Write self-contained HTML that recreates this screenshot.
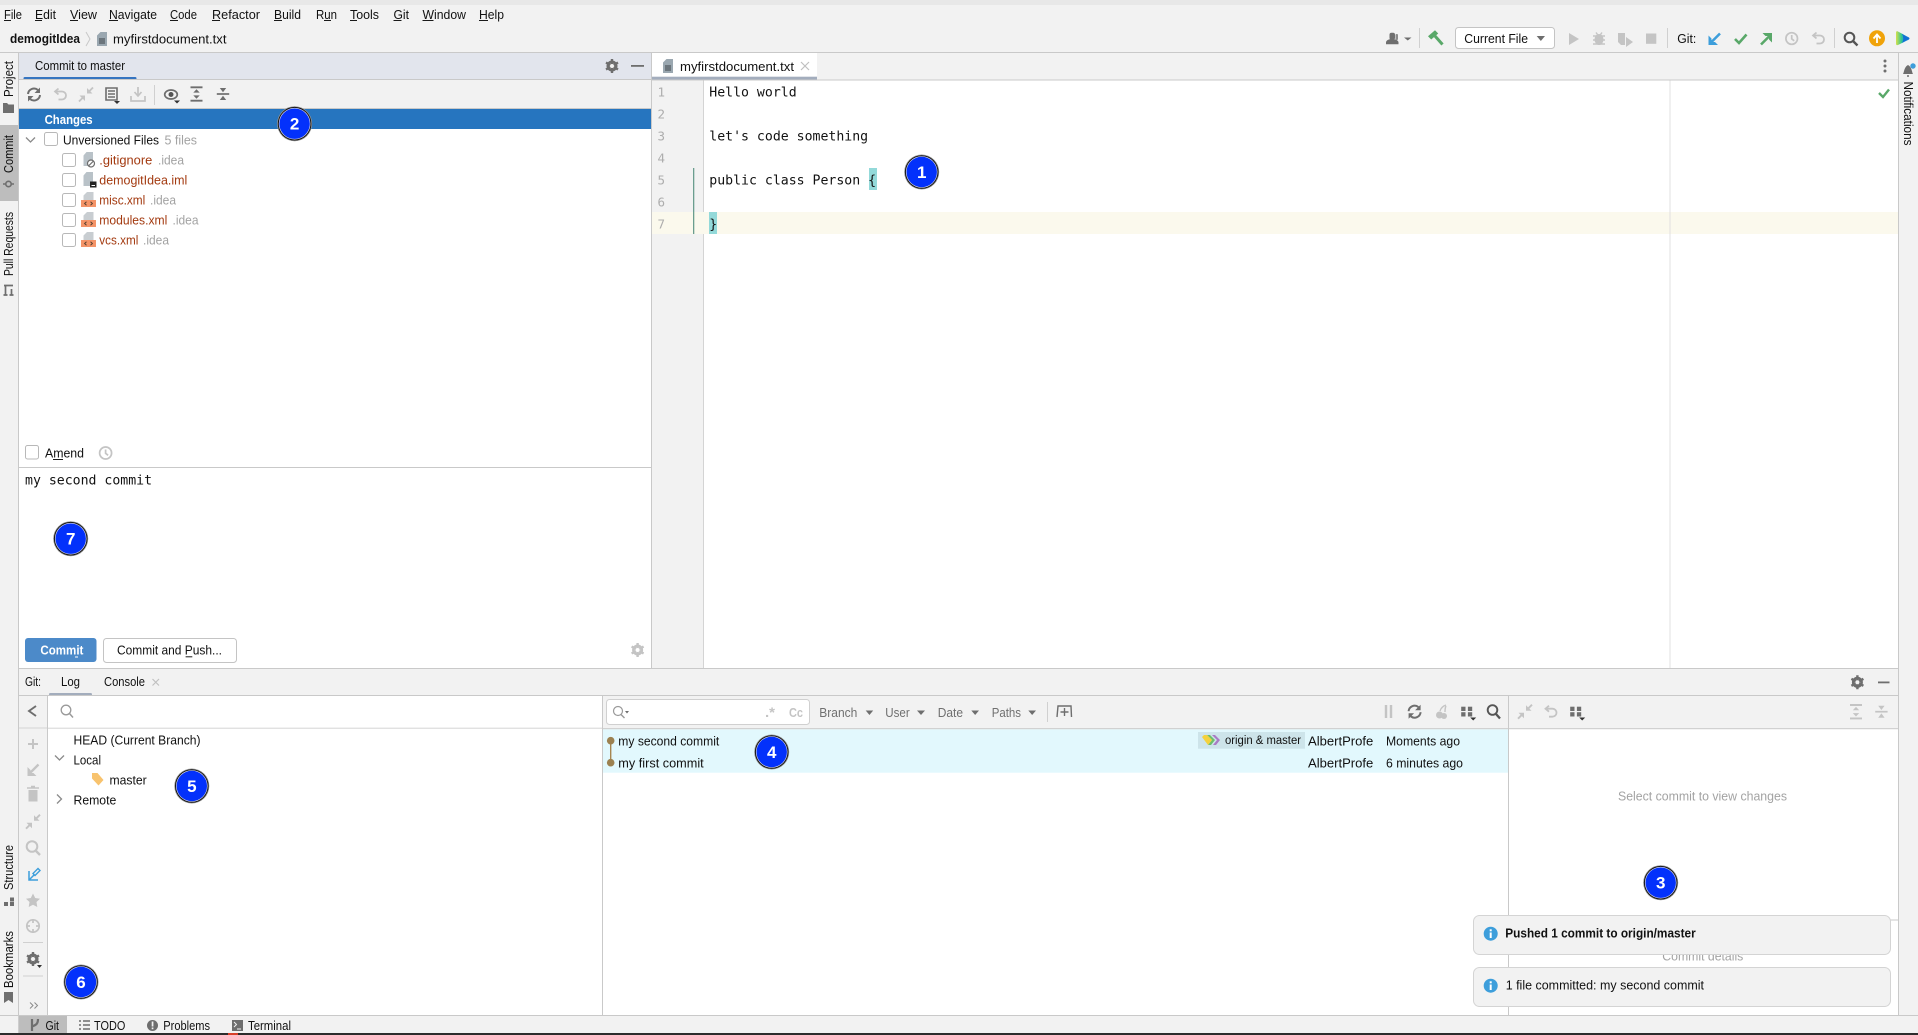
<!DOCTYPE html>
<html lang="en">
<head>
<meta charset="utf-8">
<title>demogitIdea</title>
<style>
html,body{margin:0;padding:0;width:1918px;height:1035px;overflow:hidden;background:#f2f2f2}
svg{display:block}
text{font-family:"Liberation Sans",sans-serif;font-size:12.5px;fill:#111}
.mono{font-family:"DejaVu Sans Mono","Liberation Mono",monospace;font-size:13.2px;fill:#111}
.b{font-weight:bold}
.g{fill:#a3a3a3}
.r{fill:#a33a10}
.f{fill:#707070}
.w{fill:#fff}
.ln{fill:#adadad;font-family:"DejaVu Sans Mono","Liberation Mono",monospace;font-size:12.5px}
.num{font-family:"Liberation Sans",sans-serif;font-weight:bold;font-size:17px;fill:#fff;text-anchor:middle}
.i{fill:none;stroke:#6e6e6e;stroke-width:1.7}
.d{fill:none;stroke:#c4c4c4;stroke-width:1.7}
.cb{fill:#fff;stroke:#b8b8b8;stroke-width:1}
</style>
</head>
<body>
<svg width="1918" height="1035" viewBox="0 0 1918 1035" xmlns="http://www.w3.org/2000/svg">
<defs>
<linearGradient id="lg" x1="0" y1="0" x2="1" y2="0"><stop offset="0" stop-color="#d6e04c"/><stop offset=".4" stop-color="#35c78f"/><stop offset=".7" stop-color="#1a9ad0"/><stop offset="1" stop-color="#1270d6"/></linearGradient>
<g id="doc"><path d="M3.500 0H10V14H0V3.500Z" fill="#9aa7b0"/><path d="M2 7h6M2 9h6M2 11h6" stroke="#3c4347" stroke-width="1"/></g>
<g id="sheet"><path d="M3.500 0H10V8H0V3.500Z" fill="#c8cdd1"/></g>
<g id="xml"><use href="#sheet" x="2.500" y="0"/><rect x="0" y="8" width="15" height="7" fill="#f49468"/><path d="M5.500 9.800 3.600 11.500 5.500 13.200M9.500 9.800 11.400 11.500 9.500 13.200" fill="none" stroke="#5a4030" stroke-width="1"/></g>
<g id="gear"><circle cx="0" cy="0" r="4.200" fill="none" stroke="#6e6e6e" stroke-width="2.600"/><path d="M0-7V7M-6-3.500 6 3.500M-6 3.500 6-3.500" stroke="#6e6e6e" stroke-width="2.400"/><circle cx="0" cy="0" r="2" fill="#f2f2f2"/></g>
<g id="gearl"><circle cx="0" cy="0" r="4.200" fill="none" stroke="#c4c4c4" stroke-width="2.600"/><path d="M0-7V7M-6-3.500 6 3.500M-6 3.500 6-3.500" stroke="#c4c4c4" stroke-width="2.400"/><circle cx="0" cy="0" r="2" fill="#fff"/></g>
<g id="grid"><rect x="-5.500" y="-5" width="4.300" height="4.300" fill="#6e6e6e"/><rect x="1.200" y="-5" width="4.300" height="4.300" fill="#6e6e6e"/><rect x="-5.500" y=".5" width="4.300" height="4.300" fill="#6e6e6e"/><rect x="1.200" y=".5" width="4.300" height="4.300" fill="#6e6e6e"/><path d="M3.500 5.800h6l-3 3z" fill="#333"/></g>
<g id="mark"><circle r="17.500" fill="#999"/><circle r="16.800" fill="#151515"/><circle r="15.800" fill="#dde"/><circle r="15.200" fill="#0331fb"/></g>
<g id="undo"><path d="M-2-6-5.500-3-2 0" fill="none" stroke="#c4c4c4" stroke-width="1.800"/><path d="M-5-3H1.500A3.800 3.800 0 0 1 1.500 5H-2" fill="none" stroke="#c4c4c4" stroke-width="1.800"/></g>
<g id="cmp"><path d="M-7 7-2.500 2.500M7-7 2.500-2.500" stroke="#c4c4c4" stroke-width="1.900"/><path d="M-1 1-6.500 1-1 6.500ZM1-1 6.500-1 1-6.500Z" fill="#c4c4c4"/></g>
<g id="refr"><path d="M-6-.5A6 6 0 0 1 3.800-4.600M6 .5A6 6 0 0 1-3.800 4.600" fill="none" stroke="#6e6e6e" stroke-width="2"/><path d="M6-7V-1.500H.5ZM-6 7V1.500H-.5Z" fill="#6e6e6e"/></g>
<g id="exp"><path d="M-6-6.700H6M-6 6.700H6" stroke-width="1.900" fill="none"/><path d="M0-4.800-3.200-1.400H3.200ZM0 4.800-3.200 1.400H3.200Z" stroke="none"/></g>
<g id="col"><path d="M-6.200 0H6.200" stroke-width="1.700" fill="none"/><path d="M0-1.700-3.200-6H3.200ZM0 1.700-3.200 6H3.200Z" stroke="none"/></g>
</defs>

<!-- base -->
<rect width="1918" height="1035" fill="#f2f2f2"/>
<rect width="1918" height="5" fill="#e8e8e8"/>

<!-- menu -->
<text x="4" y="19" textLength="18" lengthAdjust="spacingAndGlyphs">File</text>
<text x="35" y="19" textLength="21" lengthAdjust="spacingAndGlyphs">Edit</text>
<text x="70" y="19" textLength="27" lengthAdjust="spacingAndGlyphs">View</text>
<text x="109" y="19" textLength="48" lengthAdjust="spacingAndGlyphs">Navigate</text>
<text x="170" y="19" textLength="27" lengthAdjust="spacingAndGlyphs">Code</text>
<text x="212" y="19" textLength="48" lengthAdjust="spacingAndGlyphs">Refactor</text>
<text x="274" y="19" textLength="27" lengthAdjust="spacingAndGlyphs">Build</text>
<text x="316" y="19" textLength="21" lengthAdjust="spacingAndGlyphs">Run</text>
<text x="350" y="19" textLength="29" lengthAdjust="spacingAndGlyphs">Tools</text>
<text x="393.500" y="19" textLength="15.500" lengthAdjust="spacingAndGlyphs">Git</text>
<text x="422.500" y="19" textLength="43.500" lengthAdjust="spacingAndGlyphs">Window</text>
<text x="479" y="19" textLength="25" lengthAdjust="spacingAndGlyphs">Help</text>
<path d="M4 20.500h7M35 20.500h7M70 20.500h8M109 20.500h9M170 20.500h8M212 20.500h8M274 20.500h8M324 20.500h7M350 20.500h7M393.500 20.500h8M422.500 20.500h11M479 20.500h9" stroke="#1a1a1a" stroke-width="1"/>

<!-- nav bar -->
<text class="b" x="10" y="43" textLength="70" lengthAdjust="spacingAndGlyphs">demogitIdea</text>
<path d="M86 32 90 39 86 46" fill="none" stroke="#c8c8c8"/>
<use href="#doc" x="97" y="32" />
<text x="113" y="43.500" textLength="113.500" lengthAdjust="spacingAndGlyphs">myfirstdocument.txt</text>

<!-- top right toolbar -->
<rect x="1389.500" y="32.700" width="5.500" height="7" rx="2" fill="#6e6e6e"/><rect x="1395.500" y="34" width="2.500" height="6" rx="1" fill="#8a8a8a"/><path d="M1386 44.300v-1.800c0-2 2.500-3.500 6-3.500s6.500 1.500 6.500 3.500v1.800z" fill="#6e6e6e"/>
<path d="M1404 37.500h7.500l-3.750 3z" fill="#6e6e6e"/>
<rect x="1419" y="28" width="1" height="20" fill="#d0d0d0"/>
<path d="M1428 36.300 1435 30.300 1438.200 33.500 1431.200 39.500z" fill="#59a869"/><path d="M1435 36 1442.500 44.500" stroke="#59a869" stroke-width="3"/>
<rect x="1455.500" y="27.500" width="99" height="21" rx="3" fill="#fff" stroke="#c4c4c4"/>
<text x="1464.300" y="43" textLength="63.700" lengthAdjust="spacingAndGlyphs">Current File</text>
<path d="M1536.700 36h8.300l-4.150 5z" fill="#6e6e6e"/>
<path d="M1569 33 1579 39 1569 45z" fill="#c4c4c4"/>
<ellipse cx="1599" cy="39.500" rx="4.500" ry="5.500" fill="#c4c4c4"/><path d="M1593 36h12M1593 40h12M1593 44h12M1596 32.500l1.500 2M1602 32.500l-1.500 2" stroke="#c4c4c4" stroke-width="1.400"/>
<path d="M1618 33h7v12h-4l-3-3z" fill="#c4c4c4"/><path d="M1626 37 1633 42 1626 47z" fill="#c4c4c4"/>
<rect x="1646" y="33.500" width="10.300" height="10.300" fill="#c4c4c4"/>
<rect x="1667" y="28" width="1" height="20" fill="#d0d0d0"/>
<text x="1677.300" y="43" textLength="19" lengthAdjust="spacingAndGlyphs">Git:</text>
<path d="M1720 33.500 1711 42.500" stroke="#3d9edb" stroke-width="2.600"/><path d="M1708.500 35.500v9.500h9.500l-3-3h-3.500v-3.500z" fill="#3d9edb"/>
<path d="M1735 39 1739 43 1746.500 34.500" fill="none" stroke="#59a869" stroke-width="2.600"/>
<path d="M1761 44.500 1770 35.500" stroke="#59a869" stroke-width="2.600"/><path d="M1762.500 33h9.500v9.500l-3-3v-3.500h-3.500z" fill="#59a869"/>
<circle cx="1791.700" cy="38.500" r="5.800" class="d"/><path d="M1791.700 35v3.800l2.500 2" class="d"/>
<use href="#undo" x="1818.500" y="38.500"/>
<rect x="1834" y="28" width="1" height="20" fill="#d0d0d0"/>
<circle cx="1849.500" cy="37.500" r="4.800" fill="none" stroke="#555" stroke-width="2"/><path d="M1853 41 1857.500 45.500" stroke="#555" stroke-width="2.400"/>
<circle cx="1877" cy="38.300" r="8" fill="#f0a30a"/><path d="M1877 43v-8M1873.500 38.500 1877 34.500 1880.500 38.500" fill="none" stroke="#fff" stroke-width="1.800"/>
<path d="M1897.500 31.200Q1896 30.800 1896 33V43.500Q1896 45.700 1898 45L1908.800 39.600Q1910.200 38.500 1908.800 37.400Z" fill="url(#lg)"/>
<path d="M1902 33.800 1909.400 38.500 1902 43Q1904.500 38.500 1902 33.800Z" fill="#1270d6"/>

<rect y="52" width="1918" height="1" fill="#c9c9c9"/>

<!-- left strip -->
<rect x="0" y="125" width="18" height="76" fill="#bdbdbd"/>
<rect x="18" y="53" width="1" height="962" fill="#c9c9c9"/>
<g>
<text transform="translate(13,97) rotate(-90)" textLength="36" lengthAdjust="spacingAndGlyphs">Project</text>
<path d="M3 103h4l1.500 1.500H14V113H3z" fill="#6e6e6e"/>
<text transform="translate(13,173) rotate(-90)" textLength="38" lengthAdjust="spacingAndGlyphs">Commit</text>
<circle cx="8.500" cy="184" r="2.700" fill="none" stroke="#6e6e6e" stroke-width="1.600"/><path d="M3 184h3M11 184h3" stroke="#6e6e6e" stroke-width="1.400"/>
<text transform="translate(13,276) rotate(-90)" textLength="64" lengthAdjust="spacingAndGlyphs">Pull Requests</text>
<path d="M4 285.500h9M5.500 285.500v9.500M11.500 289v6M3.500 295h4M9.500 295h4" stroke="#6e6e6e" stroke-width="1.700" fill="none"/>
<text transform="translate(13,890) rotate(-90)" textLength="45" lengthAdjust="spacingAndGlyphs">Structure</text>
<path d="M10 897.500h4v4h-4zM4 902h4v4H4zM10 902h4v4h-4z" fill="#6e6e6e"/>
<text transform="translate(13,988) rotate(-90)" textLength="57" lengthAdjust="spacingAndGlyphs">Bookmarks</text>
<path d="M4 992h9v11l-4.500-3-4.500 3z" fill="#6e6e6e"/>
</g>

<!-- commit panel -->
<rect x="19" y="53" width="632" height="26" fill="#e2e5ed"/>
<text x="35" y="70" textLength="90" lengthAdjust="spacingAndGlyphs">Commit to master</text>
<rect x="23.500" y="77" width="113" height="2.600" rx="1.300" fill="#3574c0"/>
<use href="#gear" x="612" y="66"/>
<rect x="631" y="65" width="13" height="1.800" fill="#6e6e6e"/>
<rect x="19" y="79" width="633" height="1" fill="#c9c9c9"/>
<rect x="19" y="108" width="633" height="1" fill="#c9c9c9"/>

<use href="#refr" x="34" y="94.500"/>
<use href="#undo" x="60.500" y="94.500"/>
<use href="#cmp" x="86" y="94.500"/>
<path d="M106 88h11v12h-11zM108 91h7M108 94h7M108 97h7" fill="none" stroke="#6e6e6e" stroke-width="1.600"/><path d="M114 101h6l-3 3z" fill="#333"/>
<path d="M138 87v8M134.500 92 138 96 141.500 92M131 96v5h14v-5" fill="none" stroke="#c4c4c4" stroke-width="1.700"/>
<rect x="154" y="85" width="1" height="20" fill="#d0d0d0"/>
<ellipse cx="171" cy="94.500" rx="6.300" ry="4.500" fill="none" stroke="#6e6e6e" stroke-width="1.700"/><circle cx="171" cy="94.500" r="2.500" fill="#555"/><path d="M174 100.500h6l-3 3z" fill="#333"/>
<use href="#exp" x="196.500" y="94" fill="#6e6e6e" stroke="#6e6e6e"/>
<use href="#col" x="223" y="94" fill="#6e6e6e" stroke="#6e6e6e"/>

<rect x="19" y="109" width="632" height="20" fill="#2675bf"/>
<text class="b w" x="44.600" y="124" textLength="48" lengthAdjust="spacingAndGlyphs">Changes</text>

<rect x="19" y="129" width="632" height="338" fill="#fff"/>
<path d="M26 137.500 30.500 142 35 137.500" fill="none" stroke="#8a8a8a" stroke-width="1.300"/>
<rect x="44.500" y="132.500" width="13" height="13" rx="2" class="cb"/>
<text x="63" y="144.500" textLength="96" lengthAdjust="spacingAndGlyphs">Unversioned Files</text>
<text class="g" x="164.500" y="144.500" textLength="32.500" lengthAdjust="spacingAndGlyphs">5 files</text>

<rect x="62.500" y="153.500" width="13" height="13" rx="2" class="cb"/>
<rect x="62.500" y="173.500" width="13" height="13" rx="2" class="cb"/>
<rect x="62.500" y="193.500" width="13" height="13" rx="2" class="cb"/>
<rect x="62.500" y="213.500" width="13" height="13" rx="2" class="cb"/>
<rect x="62.500" y="233.500" width="13" height="13" rx="2" class="cb"/>

<path d="M86.500 152H93V166H83.500V155.500Z" fill="#b9c2c8"/><circle cx="91" cy="163.500" r="3.500" fill="#fff" stroke="#6e6e6e" stroke-width="1.200"/><path d="M88.800 165.700 93.200 161.300" stroke="#6e6e6e" stroke-width="1.100"/>
<path d="M86.500 172H93V186H83.500V175.500Z" fill="#b9c2c8"/><rect x="90" y="181.500" width="6.500" height="6" fill="#222"/><rect x="91.500" y="185" width="3.500" height="1" fill="#fff"/>
<use href="#xml" x="81" y="192"/>
<use href="#xml" x="81" y="212"/>
<use href="#xml" x="81" y="232"/>

<text class="r" x="99.300" y="164.500" textLength="53" lengthAdjust="spacingAndGlyphs">.gitignore</text>
<text class="g" x="158" y="164.500" textLength="26" lengthAdjust="spacingAndGlyphs">.idea</text>
<text class="r" x="99.300" y="184.500" textLength="88" lengthAdjust="spacingAndGlyphs">demogitIdea.iml</text>
<text class="r" x="99.300" y="204.500" textLength="46" lengthAdjust="spacingAndGlyphs">misc.xml</text>
<text class="g" x="150" y="204.500" textLength="26" lengthAdjust="spacingAndGlyphs">.idea</text>
<text class="r" x="99.300" y="224.500" textLength="68" lengthAdjust="spacingAndGlyphs">modules.xml</text>
<text class="g" x="172.500" y="224.500" textLength="26" lengthAdjust="spacingAndGlyphs">.idea</text>
<text class="r" x="99.300" y="244.500" textLength="39" lengthAdjust="spacingAndGlyphs">vcs.xml</text>
<text class="g" x="143" y="244.500" textLength="26" lengthAdjust="spacingAndGlyphs">.idea</text>

<rect x="25.500" y="445.500" width="13" height="13.500" rx="2" class="cb"/>
<text x="45" y="457.500" textLength="39" lengthAdjust="spacingAndGlyphs">Amend</text>
<path d="M53 459.500h10" stroke="#1a1a1a"/>
<circle cx="105.600" cy="453" r="6" class="d"/><path d="M105.600 449.500v3.800l2.500 2" class="d"/>

<rect x="19" y="467" width="633" height="1" fill="#c9c9c9"/>
<rect x="19" y="468" width="632" height="200" fill="#fff"/>
<text class="mono" x="25" y="484.500">my second commit</text>

<rect x="25" y="638" width="71.500" height="24" rx="3" fill="#4c8ac9"/>
<text class="b w" x="40.400" y="654.500" textLength="43" lengthAdjust="spacingAndGlyphs">Commit</text>
<path d="M75 657h3" stroke="#fff"/>
<rect x="103.500" y="638.500" width="133" height="24" rx="3" fill="#fff" stroke="#c4c4c4"/>
<text x="117" y="654.500" textLength="105" lengthAdjust="spacingAndGlyphs">Commit and Push...</text>
<path d="M185.600 656.800h6.700" stroke="#1a1a1a"/>
<use href="#gearl" x="637.600" y="650"/>

<rect x="651" y="53" width="1" height="615" fill="#c9c9c9"/>

<!-- editor -->
<rect x="652" y="53" width="165" height="24" fill="#fff"/>
<rect x="652" y="76.700" width="165" height="3.300" fill="#a3adbd"/>
<use href="#doc" x="663" y="59"/>
<text x="680" y="71" textLength="114" lengthAdjust="spacingAndGlyphs">myfirstdocument.txt</text>
<path d="M801 62 809 70M809 62 801 70" stroke="#c0c0c0" stroke-width="1.200"/>
<circle cx="1885" cy="61" r="1.500" fill="#6e6e6e"/><circle cx="1885" cy="66" r="1.500" fill="#6e6e6e"/><circle cx="1885" cy="71" r="1.500" fill="#6e6e6e"/>
<rect x="652" y="79.500" width="1246" height="1" fill="#c9c9c9"/>
<rect x="652" y="80.500" width="51" height="587.500" fill="#f2f2f2"/>
<rect x="703" y="80.500" width="1195" height="587.500" fill="#fff"/>
<rect x="703" y="80.500" width="1" height="587.500" fill="#d4d4d4"/>
<rect x="652" y="212" width="1246" height="22" fill="#fbf9ed"/>
<rect x="1669.500" y="80.500" width="1" height="587.500" fill="#e0e0e0"/>
<rect x="693" y="168" width="1.300" height="66" fill="#6b9e8f"/>
<text class="ln" x="657.500" y="96.500">1</text>
<text class="ln" x="657.500" y="118.500">2</text>
<text class="ln" x="657.500" y="140.500">3</text>
<text class="ln" x="657.500" y="162.500">4</text>
<text class="ln" x="657.500" y="184.500">5</text>
<text class="ln" x="657.500" y="206.500">6</text>
<text class="ln" x="657.500" y="228.500">7</text>
<rect x="869" y="168" width="8" height="22" fill="#93d9d9"/>
<rect x="709" y="212" width="8" height="22" fill="#93d9d9"/>
<text class="mono" x="709.300" y="96.500">Hello world</text>
<text class="mono" x="709.300" y="140.500">let's code something</text>
<text class="mono" x="709.300" y="184.500">public class Person {</text>
<text class="mono" x="709.300" y="228.500">}</text>
<path d="M1879 93 1883 97 1889 89.500" fill="none" stroke="#59a869" stroke-width="2.400"/>

<!-- right strip -->
<rect x="1898" y="53" width="1" height="962" fill="#c9c9c9"/>
<path d="M1903 74c1-1 1-7 5-9 4 2 4 8 5 9z" fill="#6e6e6e"/><circle cx="1908" cy="76" r="1" fill="#6e6e6e"/><circle cx="1913" cy="66" r="2.700" fill="#3d9edb"/>
<text transform="translate(1904,81.500) rotate(90)" textLength="64" lengthAdjust="spacingAndGlyphs">Notifications</text>

<!-- git panel -->
<rect x="19" y="668" width="1879" height="1" fill="#c9c9c9"/>
<text x="25" y="686" textLength="16" lengthAdjust="spacingAndGlyphs">Git:</text>
<text x="61" y="686" textLength="19" lengthAdjust="spacingAndGlyphs">Log</text>
<rect x="49" y="693" width="43" height="2.600" rx="1.300" fill="#a3adbd"/>
<text x="104" y="686" textLength="41" lengthAdjust="spacingAndGlyphs">Console</text>
<path d="M152.500 679 159 685.500M159 679 152.500 685.500" stroke="#c0c0c0" stroke-width="1.200"/>
<use href="#gear" x="1857.400" y="682.300"/>
<rect x="1878" y="681.500" width="11.500" height="1.800" fill="#6e6e6e"/>
<rect x="19" y="695" width="1879" height="1" fill="#c9c9c9"/>

<!-- left vertical toolbar -->
<path d="M36 706 29 711 36 716" fill="none" stroke="#6e6e6e" stroke-width="1.900"/>
<rect x="19" y="727.500" width="28" height="1" fill="#d4d4d4"/>
<path d="M33 739v10M28 744h10" stroke="#c4c4c4" stroke-width="2"/>
<path d="M38.500 764.500 30 773" stroke="#c4c4c4" stroke-width="2.300"/><path d="M27.500 767v9h9l-3-3h-3v-3z" fill="#c4c4c4"/>
<path d="M28.500 790h9v11.500h-9z" fill="#c4c4c4"/><path d="M27 788h12M31 786.500h4" stroke="#c4c4c4" stroke-width="1.600"/>
<use href="#cmp" x="33" y="821.700"/>
<circle cx="32" cy="846.500" r="5.300" fill="none" stroke="#c4c4c4" stroke-width="2"/><path d="M36 851 40 855" stroke="#c4c4c4" stroke-width="2.400"/>
<path d="M38 868.500 33 873.500 35 875.500 40 870.500z" fill="none" stroke="#3d9edb" stroke-width="1.400"/><path d="M29 871v9h9" fill="none" stroke="#3d9edb" stroke-width="1.500"/><path d="M29.500 879.500 34 875" stroke="#3d9edb" stroke-width="1.500"/>
<path d="M33 893.500 35.200 898 40 898.700 36.500 902 37.300 907 33 904.700 28.700 907 29.500 902 26 898.700 30.800 898z" fill="#c4c4c4"/>
<circle cx="33" cy="926" r="6.200" class="d"/><path d="M33 919v4M33 929v4M26 926h4M36 926h4" class="d"/>
<rect x="23" y="942" width="20" height="1" fill="#d0d0d0"/>
<use href="#gear" x="33" y="959"/>
<path d="M37 965h5l-2.500 3z" fill="#333"/>
<rect x="23" y="975.500" width="20" height="1" fill="#d0d0d0"/>
<path d="M30 1002.500 33 1005.500 30 1008.500M34.500 1002.500 37.500 1005.500 34.500 1008.500" fill="none" stroke="#8a8a8a"/>

<!-- branch panel -->
<rect x="48" y="696" width="554" height="319" fill="#fff"/>
<rect x="47" y="696" width="1" height="319" fill="#c9c9c9"/>
<rect x="48" y="727.700" width="554" height="1" fill="#d4d4d4"/>
<circle cx="66" cy="710" r="4.800" fill="none" stroke="#9a9a9a" stroke-width="1.300"/><path d="M69.500 713.500 73 717.500" stroke="#9a9a9a" stroke-width="1.500"/>
<text x="73.500" y="744.500" textLength="127" lengthAdjust="spacingAndGlyphs">HEAD (Current Branch)</text>
<path d="M55 755.500 59.500 760 64 755.500" fill="none" stroke="#8a8a8a" stroke-width="1.300"/>
<text x="73.500" y="764.500" textLength="27.500" lengthAdjust="spacingAndGlyphs">Local</text>
<path d="M92 773h5.500l6 7-5 5.500L92 778.500z" fill="#f8c36e"/>
<text x="109.500" y="784.500" textLength="37.200" lengthAdjust="spacingAndGlyphs">master</text>
<path d="M57 794.500 61.500 799 57 803.500" fill="none" stroke="#8a8a8a" stroke-width="1.300"/>
<text x="73.500" y="804.500" textLength="42.800" lengthAdjust="spacingAndGlyphs">Remote</text>
<rect x="602" y="696" width="1" height="319" fill="#c9c9c9"/>

<!-- log panel -->
<rect x="603" y="728.700" width="1295" height="286.300" fill="#fff"/>
<rect x="606.500" y="699.500" width="203" height="25" rx="3" fill="#fff" stroke="#d0d0d0"/>
<circle cx="618" cy="711" r="4.500" fill="none" stroke="#9a9a9a" stroke-width="1.200"/><path d="M621 714.500 624.500 718" stroke="#9a9a9a" stroke-width="1.400"/><path d="M625 711h4l-2 2.500z" fill="#6e6e6e"/>
<text x="765" y="717" style="font-weight:bold;font-size:14px;fill:#c4c4c4" textLength="10" lengthAdjust="spacingAndGlyphs">.*</text>
<text x="789" y="717" class="b" style="font-size:13px;fill:#c4c4c4" textLength="14" lengthAdjust="spacingAndGlyphs">Cc</text>
<text class="f" x="819.300" y="717" textLength="38" lengthAdjust="spacingAndGlyphs">Branch</text>
<path d="M865.700 710.500h7.500l-3.750 4.500z" fill="#6e6e6e"/>
<text class="f" x="885.300" y="717" textLength="24.400" lengthAdjust="spacingAndGlyphs">User</text>
<path d="M917 710.500h8l-4 4.500z" fill="#6e6e6e"/>
<text class="f" x="937.700" y="717" textLength="25.300" lengthAdjust="spacingAndGlyphs">Date</text>
<path d="M971.300 710.500h7.700l-3.850 4.500z" fill="#6e6e6e"/>
<text class="f" x="991.700" y="717" textLength="29.300" lengthAdjust="spacingAndGlyphs">Paths</text>
<path d="M1028.300 710.500h7.700l-3.850 4.500z" fill="#6e6e6e"/>
<rect x="1047" y="702" width="1" height="20" fill="#d0d0d0"/>
<path d="M1057 717 1058 706H1071L1071.500 717M1064.500 708v8M1060.500 712h8" fill="none" stroke="#6e6e6e" stroke-width="1.400"/>

<rect x="603" y="729.300" width="905.500" height="43.400" fill="#e2f8fd"/>
<path d="M610.700 741V763" stroke="#a68650" stroke-width="1.400"/>
<circle cx="610.700" cy="740.700" r="3.800" fill="#9c8150"/>
<circle cx="610.700" cy="762.700" r="3.800" fill="#9c8150"/>
<text x="618.300" y="745.500" textLength="101" lengthAdjust="spacingAndGlyphs">my second commit</text>
<text x="618.300" y="767.500" textLength="85.400" lengthAdjust="spacingAndGlyphs">my first commit</text>

<rect x="1198" y="732" width="107" height="16.700" fill="#cde4ea"/>
<path d="M1212 735l5 5-4 5h3l4-5-5-5z" fill="#a97bc4"/>
<path d="M1207 735l5 5-4 5h3l4-5-5-5z" fill="#6fbf6a"/>
<path d="M1202 737l2-2h3l5 5-4 5z" fill="#f4d13c"/>
<text x="1225" y="744" style="font-size:11.500px" textLength="76" lengthAdjust="spacingAndGlyphs">origin &amp; master</text>
<text x="1308" y="745.500" textLength="65.300" lengthAdjust="spacingAndGlyphs">AlbertProfe</text>
<text x="1386" y="745.500" textLength="74" lengthAdjust="spacingAndGlyphs">Moments ago</text>
<text x="1308" y="767.500" textLength="65.300" lengthAdjust="spacingAndGlyphs">AlbertProfe</text>
<text x="1386" y="767.500" textLength="77" lengthAdjust="spacingAndGlyphs">6 minutes ago</text>

<path d="M1386 705v13M1391 705v13" stroke="#c4c4c4" stroke-width="2.400"/>
<use href="#refr" x="1414.600" y="711.700"/>
<circle cx="1439.500" cy="715" r="3.500" fill="#c4c4c4"/><circle cx="1444" cy="716" r="3" fill="#c4c4c4"/><path d="M1440 711c1-3 3-5 6-6M1445 712c0-2 0-4 1-6" fill="none" stroke="#c4c4c4" stroke-width="1.400"/>
<use href="#grid" x="1466.700" y="711.700"/>
<circle cx="1492.500" cy="710" r="4.800" fill="none" stroke="#555" stroke-width="1.900"/><path d="M1496 714 1500 718.500" stroke="#555" stroke-width="2.300"/>
<rect x="1508" y="696" width="1" height="319" fill="#c9c9c9"/>
<use href="#cmp" x="1525" y="711.700"/>
<use href="#undo" x="1551" y="711.700"/>
<use href="#grid" x="1575.700" y="711.700"/>
<use href="#exp" x="1856" y="711.700" fill="#c4c4c4" stroke="#c4c4c4"/>
<use href="#col" x="1881.400" y="711.700" fill="#c4c4c4" stroke="#c4c4c4"/>
<rect x="603" y="728.200" width="1295" height="1" fill="#c9c9c9"/>
<rect x="1508" y="696" width="1" height="319" fill="#c9c9c9"/>

<text class="g" x="1618" y="800.500" textLength="169" lengthAdjust="spacingAndGlyphs">Select commit to view changes</text>
<rect x="1508.500" y="919.500" width="389.500" height="1" fill="#c9c9c9"/>
<text class="g" x="1662.300" y="960.500" textLength="81" lengthAdjust="spacingAndGlyphs">Commit details</text>

<!-- notifications -->
<rect x="1473.500" y="915.500" width="417" height="39" rx="6" fill="#f2f2f2" stroke="#d4d4d4"/>
<circle cx="1490.700" cy="933.700" r="7" fill="#3d9edb"/><rect x="1489.700" y="932.500" width="2" height="5.500" fill="#fff"/><rect x="1489.700" y="929.300" width="2" height="2" fill="#fff"/>
<text class="b" x="1505.300" y="937.500" textLength="190.400" lengthAdjust="spacingAndGlyphs">Pushed 1 commit to origin/master</text>
<rect x="1473.500" y="967.500" width="417" height="39" rx="6" fill="#f2f2f2" stroke="#d4d4d4"/>
<circle cx="1490.700" cy="985.700" r="7" fill="#3d9edb"/><rect x="1489.700" y="984.500" width="2" height="5.500" fill="#fff"/><rect x="1489.700" y="981.300" width="2" height="2" fill="#fff"/>
<text x="1505.700" y="989.500" textLength="198.300" lengthAdjust="spacingAndGlyphs">1 file committed: my second commit</text>

<!-- status bar -->
<rect y="1015" width="1918" height="1" fill="#c9c9c9"/>
<rect x="18.300" y="1016" width="48.700" height="17" fill="#bdbdbd"/>
<path d="M32 1019v12M38 1019c0 5-2 6-6 7.500" fill="none" stroke="#6e6e6e" stroke-width="2.200"/>
<text x="45.500" y="1030" textLength="13.500" lengthAdjust="spacingAndGlyphs">Git</text>
<path d="M79 1021h2M83 1021h7M79 1025h2M83 1025h7M79 1029h2M83 1029h7" stroke="#6e6e6e" stroke-width="1.500"/>
<text x="94" y="1030" textLength="31.300" lengthAdjust="spacingAndGlyphs">TODO</text>
<circle cx="152.500" cy="1025.500" r="5.500" fill="#6e6e6e"/><rect x="151.700" y="1021.500" width="1.700" height="5" fill="#f2f2f2"/><rect x="151.700" y="1027.500" width="1.700" height="1.700" fill="#f2f2f2"/>
<text x="163.300" y="1030" textLength="46.700" lengthAdjust="spacingAndGlyphs">Problems</text>
<rect x="232" y="1020" width="11" height="11" fill="#6e6e6e"/><path d="M234 1022l2.500 2.500-2.500 2.500M237 1029h4" fill="none" stroke="#f2f2f2" stroke-width="1"/>
<text x="248" y="1030" textLength="43" lengthAdjust="spacingAndGlyphs">Terminal</text>
<rect y="1033" width="1918" height="2" fill="#2c2c2c"/>
<rect x="228" y="1033" width="10" height="2" fill="#d8402a"/>

<!-- annotation circles -->
<use href="#mark" x="921.700" y="172"/><text class="num" x="921.700" y="178">1</text>
<use href="#mark" x="294.600" y="123.700"/><text class="num" x="294.600" y="129.700">2</text>
<use href="#mark" x="1660.700" y="882.700"/><text class="num" x="1660.700" y="888.700">3</text>
<use href="#mark" x="771.700" y="752"/><text class="num" x="771.700" y="758">4</text>
<use href="#mark" x="191.800" y="786"/><text class="num" x="191.800" y="792">5</text>
<use href="#mark" x="81" y="982"/><text class="num" x="81" y="988">6</text>
<use href="#mark" x="70.700" y="538.700"/><text class="num" x="70.700" y="544.700">7</text>
</svg>
</body>
</html>
